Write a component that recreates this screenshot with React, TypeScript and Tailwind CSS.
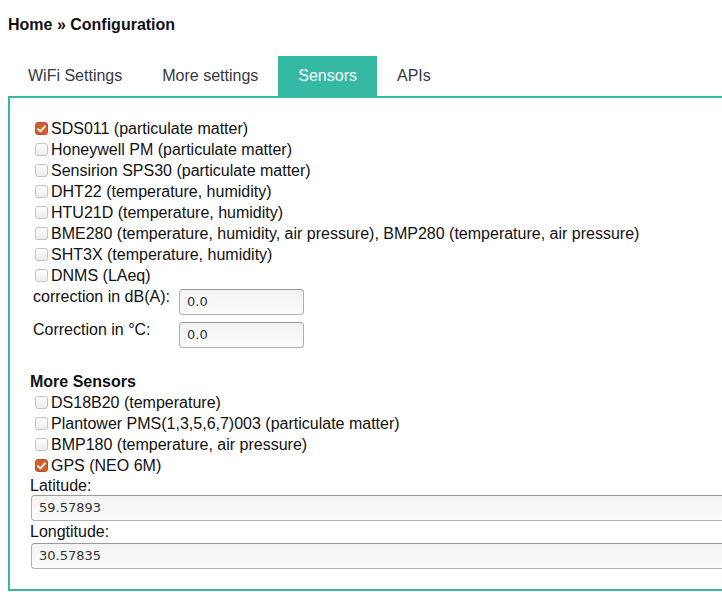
import React from "react";

const Check = ({ checked }: { checked?: boolean }) =>
  checked ? (
    <span className="inline-flex items-center justify-center w-[13px] h-[13px] rounded-[3px] bg-[#d2602f] border border-[#b9502a] ml-[5px] mr-[3px] shrink-0">
      <svg width="9" height="8" viewBox="0 0 9 8">
        <path d="M1 4.2 L3.4 6.4 L8 1.4" stroke="#fff" strokeWidth="1.8" fill="none" strokeLinecap="round" strokeLinejoin="round" />
      </svg>
    </span>
  ) : (
    <span className="inline-block w-[13px] h-[13px] rounded-[3px] bg-gradient-to-b from-white to-[#ececec] border border-[#c4c4c4] ml-[5px] mr-[3px] shrink-0" />
  );

const Row = ({ label, checked }: { label: string; checked?: boolean }) => (
  <div className="flex items-center h-[21px]">
    <Check checked={checked} />
    <span>{label}</span>
  </div>
);

const inputCls =
  "h-[26px] rounded-[4px] border border-[#b0b0b0] border-t-[#999] bg-gradient-to-b from-[#f3f3f3] to-[#fbfbfb] flex items-center pl-[7px] text-[13px] text-[#333] [font-family:'DejaVu_Sans',sans-serif]";

export default function App() {
  return (
    <div className="w-[722px] h-[615px] overflow-hidden bg-white text-[16px] text-[#111] [font-family:'Liberation_Sans',Arial,sans-serif]">
      <div className="pl-[8px] pt-[15px] h-[56px] font-bold text-[16px] leading-[19px]">Home » Configuration</div>
      <div className="flex pl-[8px] h-[40px] text-[#333a44]">
        <div className="px-5 flex items-center">WiFi Settings</div>
        <div className="px-5 flex items-center">More settings</div>
        <div className="px-5 flex items-center bg-[#35b9a5] text-white">Sensors</div>
        <div className="px-5 flex items-center">APIs</div>
      </div>
      <div className="ml-[8px] w-[780px] border-2 border-[#35b9a5] pt-[20px] pl-[20px] pb-[20px]">
        <Row label="SDS011 (particulate matter)" checked />
        <Row label="Honeywell PM (particulate matter)" />
        <Row label="Sensirion SPS30 (particulate matter)" />
        <Row label="DHT22 (temperature, humidity)" />
        <Row label="HTU21D (temperature, humidity)" />
        <Row label="BME280 (temperature, humidity, air pressure), BMP280 (temperature, air pressure)" />
        <Row label="SHT3X (temperature, humidity)" />
        <Row label="DNMS (LAeq)" />
        <div className="flex items-start h-[33px] pt-[2px]">
          <div className="w-[146px] ml-[3px] leading-[18px]">correction in dB(A):</div>
          <div className={inputCls + " w-[125px] mt-[1px]"}>0.0</div>
        </div>
        <div className="flex items-start h-[33px] pt-[2px]">
          <div className="w-[146px] ml-[3px] leading-[18px]">Correction in °C:</div>
          <div className={inputCls + " w-[125px] mt-[1px]"}>0.0</div>
        </div>
        <div className="h-[19px]" />
        <div className="h-[21px] flex items-center font-bold">More Sensors</div>
        <Row label="DS18B20 (temperature)" />
        <Row label="Plantower PMS(1,3,5,6,7)003 (particulate matter)" />
        <Row label="BMP180 (temperature, air pressure)" />
        <Row label="GPS (NEO 6M)" checked />
        <div className="h-[19px] flex items-center">Latitude:</div>
        <div className={inputCls + " ml-[1px] w-[720px]"}>59.57893</div>
        <div className="h-[22px] flex items-center">Longtitude:</div>
        <div className={inputCls + " ml-[1px] w-[720px]"}>30.57835</div>
      </div>
    </div>
  );
}
